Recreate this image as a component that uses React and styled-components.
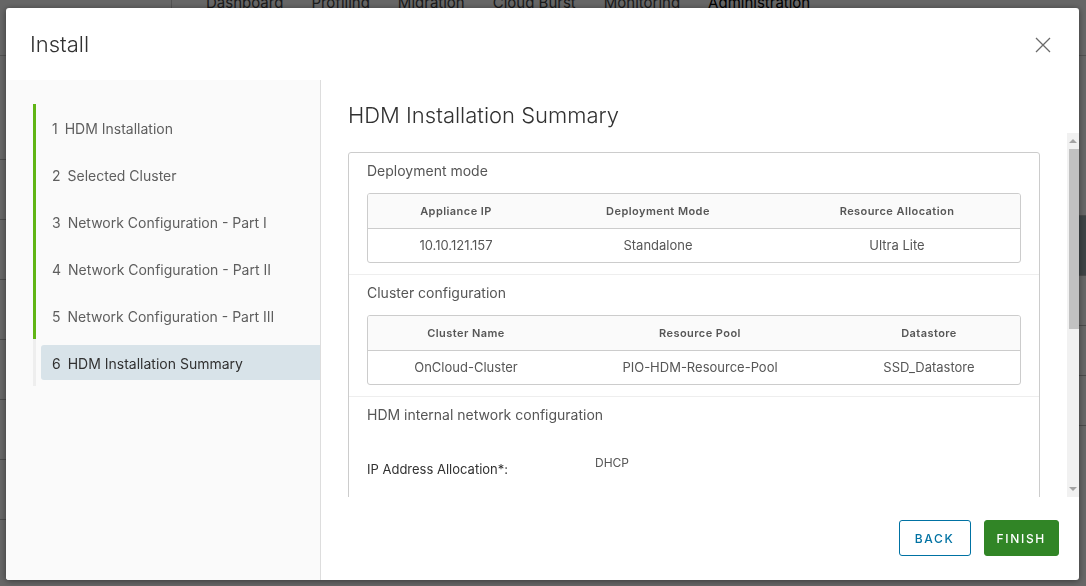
import React from 'react'
import styled, { createGlobalStyle } from 'styled-components'

const GlobalStyle = createGlobalStyle`
  html, body {
    margin: 0;
    padding: 0;
    width: 100%;
    height: 100%;
    overflow: hidden;
    font-family: 'Inter', 'Open Sans', sans-serif;
    background: #fff;
  }
  * { box-sizing: border-box; }
`

const steps = [
  { no: 1, label: 'HDM Installation', done: true },
  { no: 2, label: 'Selected Cluster', done: true },
  { no: 3, label: 'Network Configuration - Part I', done: true },
  { no: 4, label: 'Network Configuration - Part II', done: true },
  { no: 5, label: 'Network Configuration - Part III', done: true },
  { no: 6, label: 'HDM Installation Summary', active: true },
]

const tabs = ['Dashboard', 'Profiling', 'Migration', 'Cloud Burst', 'Monitoring', 'Administration']

function CloseIcon() {
  return (
    <svg width="16" height="16" viewBox="0 0 16 16">
      <path d="M1 1 L15 15 M15 1 L1 15" stroke="#6a6a6a" strokeWidth="1.3" fill="none" />
    </svg>
  )
}

function SummaryTable({ cols, head, row }) {
  const tpl = cols.map(c => c + 'px').join(' ')
  return (
    <Table>
      <HeadRow $tpl={tpl}>
        {head.map(h => <HeadCell key={h}>{h}</HeadCell>)}
      </HeadRow>
      <DataRow $tpl={tpl}>
        {row.map(r => <DataCell key={r}>{r}</DataCell>)}
      </DataRow>
    </Table>
  )
}

export default function App() {
  return (
    <>
      <GlobalStyle />
      <Page>
        <TopNav>
          <Brand />
          {tabs.map(t => <Tab key={t} $active={t === 'Administration'}>{t}</Tab>)}
        </TopNav>
        <PageBody>
          <SideList>
            {[0, 1, 2, 3, 4, 5, 6].map(i => <SideRow key={i} />)}
          </SideList>
          <PageMain>
            {[0, 1, 2, 3, 4].map(i => <PageRow key={i} $dark={i === 1} />)}
          </PageMain>
        </PageBody>
      </Page>
      <Overlay />

      <Modal>
        <ModalHeader>
          <ModalTitle>Install</ModalTitle>
          <CloseButton><CloseIcon /></CloseButton>
        </ModalHeader>

        <ModalBody>
          <Sidebar>
            <StepList>
              {steps.map(s => (
                <Step key={s.no} $done={s.done}>
                  <StepLabel $active={s.active}>
                    <StepNo>{s.no}</StepNo>{s.label}
                  </StepLabel>
                </Step>
              ))}
            </StepList>
          </Sidebar>

          <Main>
            <PageTitle>HDM Installation Summary</PageTitle>
            <ScrollArea>
              <ScrollContent>
                <Card>
                  <Section>
                    <SectionTitle>Deployment mode</SectionTitle>
                    <SummaryTable
                      cols={[176, 228, 250]}
                      head={['Appliance IP', 'Deployment Mode', 'Resource Allocation']}
                      row={['10.10.121.157', 'Standalone', 'Ultra Lite']}
                    />
                  </Section>
                  <Section>
                    <SectionTitle>Cluster configuration</SectionTitle>
                    <SummaryTable
                      cols={[196, 272, 186]}
                      head={['Cluster Name', 'Resource Pool', 'Datastore']}
                      row={['OnCloud-Cluster', 'PIO-HDM-Resource-Pool', 'SSD_Datastore']}
                    />
                  </Section>
                  <Section>
                    <SectionTitle>HDM internal network configuration</SectionTitle>
                    <FormRow>
                      <FormLabel>IP Address Allocation*:</FormLabel>
                      <FormValue>DHCP</FormValue>
                    </FormRow>
                  </Section>
                </Card>
              </ScrollContent>
              <ScrollBar>
                <Arrow $dir="up" />
                <Thumb />
                <Arrow $dir="down" />
              </ScrollBar>
            </ScrollArea>
            <Footer>
              <Button>BACK</Button>
              <Button $primary>FINISH</Button>
            </Footer>
          </Main>
        </ModalBody>
      </Modal>
    </>
  )
}

/* background page (dimmed) */
const Page = styled.div`
  width: 100%;
  height: 100vh;
  display: flex;
  flex-direction: column;
`

const TopNav = styled.div`
  height: 56px;
  display: flex;
  align-items: flex-start;
  gap: 28px;
  border-bottom: 1px solid #ccc;
  background: #fff;
`

const Brand = styled.div`
  width: 172px;
  height: 56px;
  border-right: 1px solid #ccc;
  margin-right: 6px;
`

const Tab = styled.span`
  font-size: 15px;
  line-height: 18px;
  margin-top: -6px;
  color: ${p => (p.$active ? '#000' : '#444')};
`

const PageBody = styled.div`
  flex: 1;
  display: flex;
`

const SideList = styled.div`
  width: 172px;
  padding-top: 44px;
`

const SideRow = styled.div`
  height: 60px;
  border-bottom: 1px solid #bbb;
`

const PageMain = styled.div`
  flex: 1;
  padding-top: 110px;
`

const PageRow = styled.div`
  height: ${p => (p.$dark ? '60px' : '50px')};
  border-bottom: 1px solid #bbb;
  background: ${p => (p.$dark ? '#9aa8ad' : '#fff')};
`

const Overlay = styled.div`
  position: fixed;
  inset: 0;
  background: rgba(0, 0, 0, 0.6);
`

/* modal */
const Modal = styled.div`
  position: fixed;
  left: 6px;
  top: 8px;
  width: 1073px;
  height: 572px;
  background: #fff;
  border-radius: 3px;
  box-shadow: 0 1px 6px rgba(0, 0, 0, 0.45);
  display: flex;
  flex-direction: column;
  overflow: hidden;
`

const ModalHeader = styled.div`
  height: 72px;
  flex: none;
  display: flex;
  align-items: center;
  justify-content: space-between;
  padding: 0 28px 0 24px;
`

const ModalTitle = styled.h3`
  margin: 0;
  font-size: 22px;
  font-weight: 300;
  color: #313131;
`

const CloseButton = styled.button`
  border: 0;
  background: none;
  padding: 0;
  margin-top: 2px;
  display: flex;
  cursor: pointer;
`

const ModalBody = styled.div`
  flex: 1;
  display: flex;
  min-height: 0;
`

const Sidebar = styled.nav`
  width: 315px;
  flex: none;
  background: #fafafa;
  border-right: 1px solid #dddddd;
  padding: 24px 0 0 27px;
`

const StepList = styled.div`
  display: flex;
  flex-direction: column;
`

const Step = styled.div`
  border-left: 3px solid ${p => (p.$done ? '#60b515' : '#eeeeee')};
  padding: 6px 0 6px 5px;
`

const StepLabel = styled.div`
  height: 35px;
  display: flex;
  align-items: center;
  padding: 1px 0 0 11px;
  font-size: 14px;
  color: ${p => (p.$active ? '#313131' : '#5e5e5e')};
  background: ${p => (p.$active ? '#d8e3e9' : 'transparent')};
  border-radius: 3px 0 0 3px;
`

const StepNo = styled.span`
  margin-right: 7px;
`

const Main = styled.div`
  flex: 1;
  display: flex;
  flex-direction: column;
  min-width: 0;
`

const PageTitle = styled.h2`
  margin: 0;
  padding: 22px 27px 5px;
  font-size: 22px;
  line-height: 26px;
  font-weight: 300;
  color: #313131;
`

const ScrollArea = styled.div`
  flex: 1;
  min-height: 0;
  display: flex;
`

const ScrollContent = styled.div`
  flex: 1;
  min-width: 0;
  overflow: hidden;
  padding: 19px 27px 0 27px;
`

const ScrollBar = styled.div`
  width: 12px;
  flex: none;
  background: #f1f1f1;
  display: flex;
  flex-direction: column;
  align-items: flex-end;
  justify-content: space-between;
`

const Arrow = styled.div`
  width: 12px;
  height: 16px;
  display: flex;
  align-items: center;
  justify-content: center;

  &::before {
    content: '';
    width: 0;
    height: 0;
    border-left: 4px solid transparent;
    border-right: 4px solid transparent;
    ${p => (p.$dir === 'up'
      ? 'border-bottom: 4px solid #a3a3a3;'
      : 'border-top: 4px solid #a3a3a3;')}
  }
`

const Thumb = styled.div`
  width: 10px;
  height: 180px;
  background: #c1c1c1;
  margin-bottom: auto;
`

const Card = styled.div`
  border: 1px solid #cccccc;
  border-radius: 3px;
  background: #fff;
`

const Section = styled.div`
  padding: 8px 18px 11px;
  border-bottom: 1px solid #eeeeee;

  &:last-child {
    border-bottom: 0;
    padding-bottom: 160px;
  }
`

const SectionTitle = styled.div`
  font-size: 14px;
  line-height: 20px;
  color: #565656;
  margin-bottom: 12px;
`

const Table = styled.div`
  border: 1px solid #cccccc;
  border-radius: 3px;
  overflow: hidden;
`

const HeadRow = styled.div`
  display: grid;
  grid-template-columns: ${p => p.$tpl};
  height: 35px;
  align-items: center;
  background: #fafafa;
  border-bottom: 1px solid #cccccc;
`

const HeadCell = styled.div`
  text-align: center;
  font-size: 11px;
  font-weight: 600;
  color: #565656;
  letter-spacing: 0.04em;
`

const DataRow = styled.div`
  display: grid;
  grid-template-columns: ${p => p.$tpl};
  height: 33px;
  align-items: center;
  padding-bottom: 2px;
`

const DataCell = styled.div`
  text-align: center;
  font-size: 13px;
  color: #565656;
`

const FormRow = styled.div`
  display: grid;
  grid-template-columns: 228px 1fr;
  align-items: start;
  padding-top: 18px;
`

const FormLabel = styled.div`
  font-size: 13px;
  line-height: 18px;
  padding-top: 5px;
  color: #313131;
`

const FormValue = styled.div`
  font-size: 12px;
  line-height: 16px;
  color: #565656;
`

const Footer = styled.div`
  height: 83px;
  flex: none;
  display: flex;
  justify-content: flex-end;
  align-items: flex-start;
  gap: 13px;
  padding: 23px 20px 0 0;
`

const Button = styled.button`
  height: 36px;
  padding: 0 ${p => (p.$primary ? '12px' : '15px')};
  border-radius: 3px;
  border: 1px solid ${p => (p.$primary ? '#318526' : '#0072a3')};
  background: ${p => (p.$primary ? '#318526' : '#fff')};
  color: ${p => (p.$primary ? '#fff' : '#0072a3')};
  font-family: 'Inter', 'Open Sans', sans-serif;
  font-size: 12px;
  font-weight: 500;
  letter-spacing: 0.14em;
  cursor: pointer;
`
